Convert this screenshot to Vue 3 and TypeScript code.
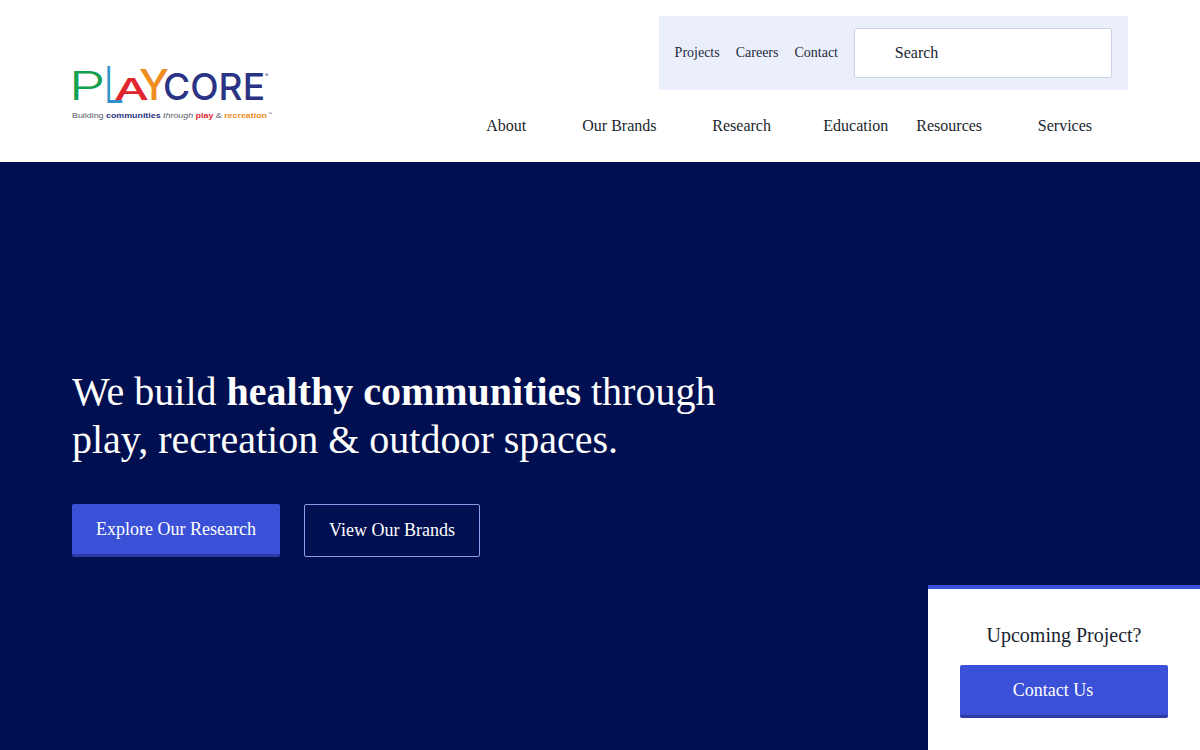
<script setup lang="ts">
const utilidades = ['Projects', 'Careers', 'Contact'];
const menu = ['About', 'Our Brands', 'Research', 'Education', 'Resources', 'Services'];
</script>

<template>
  <div class="pagina">
    <header class="cabecera">
      <a class="logo" href="#" aria-label="PlayCore">
        <svg width="204" height="58" viewBox="0 0 204 58">
          <g class="marca">
            <text x="-3.5" y="35" fill="#12a150" font-size="39" font-weight="300" textLength="37" lengthAdjust="spacingAndGlyphs">P</text>
            <text x="32" y="38" fill="#2e8fc9" font-size="50" font-weight="300" textLength="20" lengthAdjust="spacingAndGlyphs">L</text>
            <text x="42" y="35" fill="#e0252f" font-size="30" font-weight="500" textLength="35" lengthAdjust="spacingAndGlyphs">A</text>
            <text x="67" y="35" fill="#ef8d22" font-size="43" font-weight="500" textLength="30" lengthAdjust="spacingAndGlyphs">Y</text>
            <text x="91" y="35" fill="#2b3385" font-size="37" font-weight="500" textLength="102" lengthAdjust="spacingAndGlyphs">CORE</text>
            <text x="193" y="12" fill="#2b3385" font-size="5">®</text>
          </g>
          <text class="lema" x="0" y="53" textLength="195" lengthAdjust="spacingAndGlyphs"><tspan fill="#555a66">Building </tspan><tspan fill="#2b3385" font-weight="700">communities </tspan><tspan fill="#555a66" font-style="italic">through </tspan><tspan fill="#e0252f" font-weight="700">play </tspan><tspan fill="#555a66">&amp; </tspan><tspan fill="#ef8d22" font-weight="700">recreation</tspan></text>
          <text class="marca-tm" x="196" y="50" fill="#555a66">™</text>
        </svg>
      </a>
      <div class="derecha">
        <div class="utilidades">
          <a v-for="item in utilidades" :key="item" href="#">{{ item }}</a>
          <div class="buscador">Search</div>
        </div>
        <nav class="menu">
          <a v-for="item in menu" :key="item" href="#">{{ item }}</a>
        </nav>
      </div>
    </header>

    <main class="portada">
      <h1>We build <strong>healthy communities</strong> through<br />play, recreation &amp; outdoor spaces.</h1>
      <div class="acciones">
        <a class="boton" href="#">Explore Our Research</a>
        <a class="boton-linea" href="#">View Our Brands</a>
      </div>
    </main>

    <aside class="proyecto">
      <p>Upcoming Project?</p>
      <a class="boton contacto" href="#">Contact Us</a>
    </aside>
  </div>
</template>

<style scoped>
.pagina {
  position: relative;
  height: 750px;
  overflow: hidden;
  font-family: "Liberation Serif", "Times New Roman", serif;
  color: #1a1f2e;
}
a {
  text-decoration: none;
  color: inherit;
}
.cabecera {
  display: flex;
  justify-content: space-between;
  height: 162px;
  padding: 16px 72px 0;
  box-sizing: border-box;
  background: #fff;
}
.logo {
  display: block;
  margin-top: 49px;
  height: 58px;
}
.logo svg {
  display: block;
  overflow: visible;
}
.marca {
  font-family: Inter, "Liberation Sans", Arial, sans-serif;
}
.lema {
  font-family: "Liberation Sans", Arial, sans-serif;
  font-size: 8px;
}
.marca-tm {
  font-family: "Liberation Sans", Arial, sans-serif;
  font-size: 4px;
}
.derecha {
  display: flex;
  flex-direction: column;
  align-items: flex-end;
}
.utilidades {
  display: flex;
  align-items: center;
  gap: 16px;
  width: 469px;
  height: 74px;
  padding: 0 16px 0 15.6px;
  box-sizing: border-box;
  background: #ebeffc;
  font-size: 14px;
  color: #252b40;
}
.buscador {
  width: 258px;
  height: 50px;
  margin-left: auto;
  padding-left: 39.8px;
  box-sizing: border-box;
  background: #fff;
  border: 1px solid #ccd2e6;
  border-radius: 2px;
  font-size: 16px;
  line-height: 48px;
  color: #1a1f2e;
}
.menu {
  display: grid;
  grid-template-columns: 96px 130px 111px 93px 121.5px auto;
  margin-top: 26px;
  padding-right: 36px;
  font-size: 16px;
  line-height: 20px;
}
.portada {
  height: 588px;
  padding: 206px 72px 0;
  box-sizing: border-box;
  background: #000f4f;
  color: #fff;
}
h1 {
  margin: 0;
  font-size: 40px;
  font-weight: 400;
  line-height: 48px;
}
h1 strong {
  font-weight: 700;
}
.acciones {
  display: flex;
  gap: 24px;
  margin-top: 40px;
}
.boton {
  display: block;
  width: 208px;
  height: 53px;
  padding-left: 24px;
  box-sizing: border-box;
  background: #3a50d6;
  border-bottom: 3px solid #2c3aa6;
  border-radius: 2px;
  font-size: 18px;
  line-height: 50px;
  color: #fff;
}
.boton-linea {
  display: block;
  width: 176px;
  height: 53px;
  box-sizing: border-box;
  border: 1px solid #8f9bea;
  border-radius: 2px;
  font-size: 18px;
  line-height: 51px;
  text-align: center;
  color: #fff;
}
.proyecto {
  position: absolute;
  right: 0;
  bottom: 0;
  width: 272px;
  height: 165px;
  padding: 33px 32px 0;
  box-sizing: border-box;
  background: #fff;
  border-top: 4px solid #3a50d6;
}
.proyecto p {
  margin: 0 0 17px;
  font-size: 20px;
  line-height: 26px;
  text-align: center;
}
.contacto {
  padding-left: 52.7px;
}
</style>
